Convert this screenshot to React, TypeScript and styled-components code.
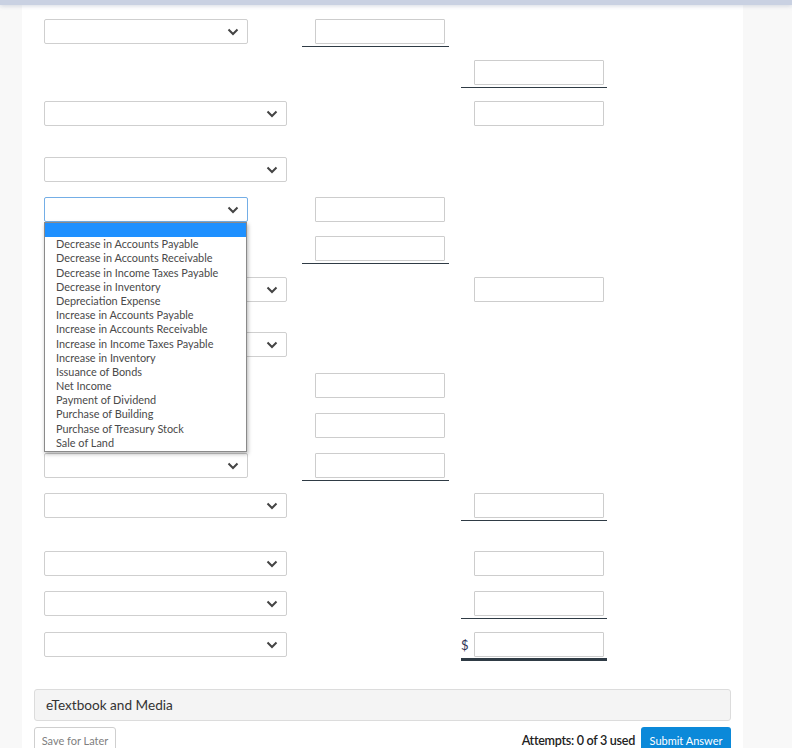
import styled, { createGlobalStyle } from "styled-components";

const GlobalStyle = createGlobalStyle`
    html, body {
        margin: 0;
        height: 100%;
        overflow: hidden;
        background: #f8f8f8;
        font-family: Lato, "Open Sans", sans-serif;
    }
`;

type Sel = "short" | "long" | null;
type Line = "none" | "single" | "thick";

interface RowData {
    pitch: number;
    select: Sel;
    col2?: Line;
    col3?: Line;
    dollar?: boolean;
    open?: boolean;
}

const rows: RowData[] = [
    { pitch: 41, select: "short", col2: "single" },
    { pitch: 41, select: null, col3: "single" },
    { pitch: 56, select: "long", col3: "none" },
    { pitch: 40, select: "long" },
    { pitch: 39, select: "short", col2: "none", open: true },
    { pitch: 41, select: null, col2: "single" },
    { pitch: 55, select: "long", col3: "none" },
    { pitch: 41, select: "long" },
    { pitch: 40, select: null, col2: "none" },
    { pitch: 40, select: null, col2: "none" },
    { pitch: 40, select: "short", col2: "single" },
    { pitch: 58, select: "long", col3: "single" },
    { pitch: 40, select: "long", col3: "none" },
    { pitch: 41, select: "long", col3: "single" },
    { pitch: 57, select: "long", col3: "thick", dollar: true },
];

const options = [
    "Decrease in Accounts Payable",
    "Decrease in Accounts Receivable",
    "Decrease in Income Taxes Payable",
    "Decrease in Inventory",
    "Depreciation Expense",
    "Increase in Accounts Payable",
    "Increase in Accounts Receivable",
    "Increase in Income Taxes Payable",
    "Increase in Inventory",
    "Issuance of Bonds",
    "Net Income",
    "Payment of Dividend",
    "Purchase of Building",
    "Purchase of Treasury Stock",
    "Sale of Land",
];

const Chevron = () => (
    <svg width="12" height="8" viewBox="0 0 12 8">
        <path d="M1.5 1.5 L6 6 L10.5 1.5" fill="none" stroke="#444" strokeWidth="2" />
    </svg>
);

const AmountCell = ({ line, dollar }: { line?: Line; dollar?: boolean }) => {
    if (!line) return <Cell $line="none" />;
    return (
        <Cell $line={line}>
            <Prefix>{dollar ? "$" : ""}</Prefix>
            <Amount />
        </Cell>
    );
};

const App = () => {
    return (
        <Page>
            <GlobalStyle />
            <TopBar />
            <Shell>
                <Gutter />
                <Panel>
                    <Sheet>
                        {rows.map((r, i) => (
                            <Row key={i} $pitch={r.pitch}>
                                <SelectCell>
                                    {r.select && (
                                        <SelectBox $wide={r.select === "long"} $focus={!!r.open}>
                                            <Chevron />
                                        </SelectBox>
                                    )}
                                    {r.open && (
                                        <OptionList>
                                            <Option $active />
                                            {options.map((o) => (
                                                <Option key={o}>{o}</Option>
                                            ))}
                                        </OptionList>
                                    )}
                                </SelectCell>
                                <AmountCell line={r.col2} />
                                <AmountCell line={r.col3} dollar={r.dollar} />
                            </Row>
                        ))}
                    </Sheet>
                    <MediaBar>eTextbook and Media</MediaBar>
                    <Footer>
                        <SaveButton>Save for Later</SaveButton>
                        <Spacer />
                        <Attempts>Attempts: 0 of 3 used</Attempts>
                        <SubmitButton>Submit Answer</SubmitButton>
                    </Footer>
                </Panel>
            </Shell>
        </Page>
    );
};

const Page = styled.div`
    display: flex;
    flex-direction: column;
    min-height: 100vh;
`;

const TopBar = styled.div`
    flex-shrink: 0;
    height: 5px;
    background: #c9d1e2;
    box-shadow: 0 1px 4px rgba(160, 170, 190, 0.45);
    position: relative;
    z-index: 2;
`;

const Shell = styled.div`
    display: flex;
    flex: 1;
`;

const Gutter = styled.div`
    width: 22px;
    flex-shrink: 0;
`;

const Panel = styled.div`
    width: 697px;
    flex-shrink: 0;
    background: #fff;
    padding: 14px 12px 0;
`;

const Sheet = styled.div`
    padding-left: 10px;
`;

const Row = styled.div<{ $pitch: number }>`
    display: grid;
    grid-template-columns: 246px 147px 146px;
    column-gap: 12px;
    align-items: start;
    height: ${(p) => p.$pitch}px;
`;

const SelectCell = styled.div`
    position: relative;
`;

const SelectBox = styled.div<{ $wide: boolean; $focus: boolean }>`
    box-sizing: border-box;
    width: ${(p) => (p.$wide ? 243 : 204)}px;
    height: 25px;
    border: 1px solid ${(p) => (p.$focus ? "#74aee6" : "#cfcfcf")};
    border-radius: 2px;
    background: #fff;
    display: flex;
    align-items: center;
    justify-content: flex-end;
    padding-right: 8px;
`;

const OptionList = styled.div`
    position: absolute;
    top: 25px;
    left: 0;
    width: 203px;
    box-sizing: border-box;
    border: 1px solid #8a8a8a;
    background: #fff;
    box-shadow: 1px 2px 4px rgba(0, 0, 0, 0.3);
    z-index: 5;
    padding-bottom: 1px;
`;

const Option = styled.div<{ $active?: boolean }>`
    height: 14.2px;
    line-height: 14.2px;
    padding-left: 11px;
    font-size: 10.9px;
    color: #4a4a4a;
    white-space: nowrap;
    background: ${(p) => (p.$active ? "#1e90ff" : "transparent")};
`;

const Cell = styled.div<{ $line: Line }>`
    display: flex;
    align-items: center;
    padding-bottom: ${(p) => (p.$line === "thick" ? 1 : 2)}px;
    border-bottom: ${(p) =>
        p.$line === "single"
            ? "1px solid #2f3b45"
            : p.$line === "thick"
              ? "3px solid #2f3b45"
              : "0"};
`;

const Prefix = styled.span`
    width: 13px;
    font-size: 13px;
    color: #2e3456;
`;

const Amount = styled.div`
    box-sizing: border-box;
    width: 130px;
    height: 25px;
    border: 1px solid #cdcdcd;
    border-radius: 1px;
    background: #fff;
`;

const MediaBar = styled.div`
    height: 30px;
    border: 1px solid #dcdcdc;
    border-radius: 3px;
    background: #f4f4f4;
    display: flex;
    align-items: center;
    padding-left: 11px;
    font-size: 13.6px;
    color: #333;
`;

const Footer = styled.div`
    display: flex;
    align-items: flex-start;
    margin-top: 6px;
`;

const Spacer = styled.div`
    flex: 1;
`;

const SaveButton = styled.div`
    width: 82px;
    height: 26px;
    box-sizing: border-box;
    border: 1px solid #cfcfcf;
    border-radius: 3px;
    font-size: 11px;
    color: #808080;
    display: flex;
    align-items: center;
    justify-content: center;
    padding-top: 1px;
`;

const Attempts = styled.div`
    font-size: 12.6px;
    font-weight: 600;
    letter-spacing: -0.3px;
    color: #222;
    padding-top: 6px;
    margin-right: 6px;
`;

const SubmitButton = styled.div`
    width: 90px;
    height: 26px;
    background: #0b89d9;
    border-radius: 3px;
    color: #fff;
    font-size: 11px;
    display: flex;
    align-items: center;
    justify-content: center;
    padding-top: 1px;
    box-sizing: border-box;
`;

export default App;
